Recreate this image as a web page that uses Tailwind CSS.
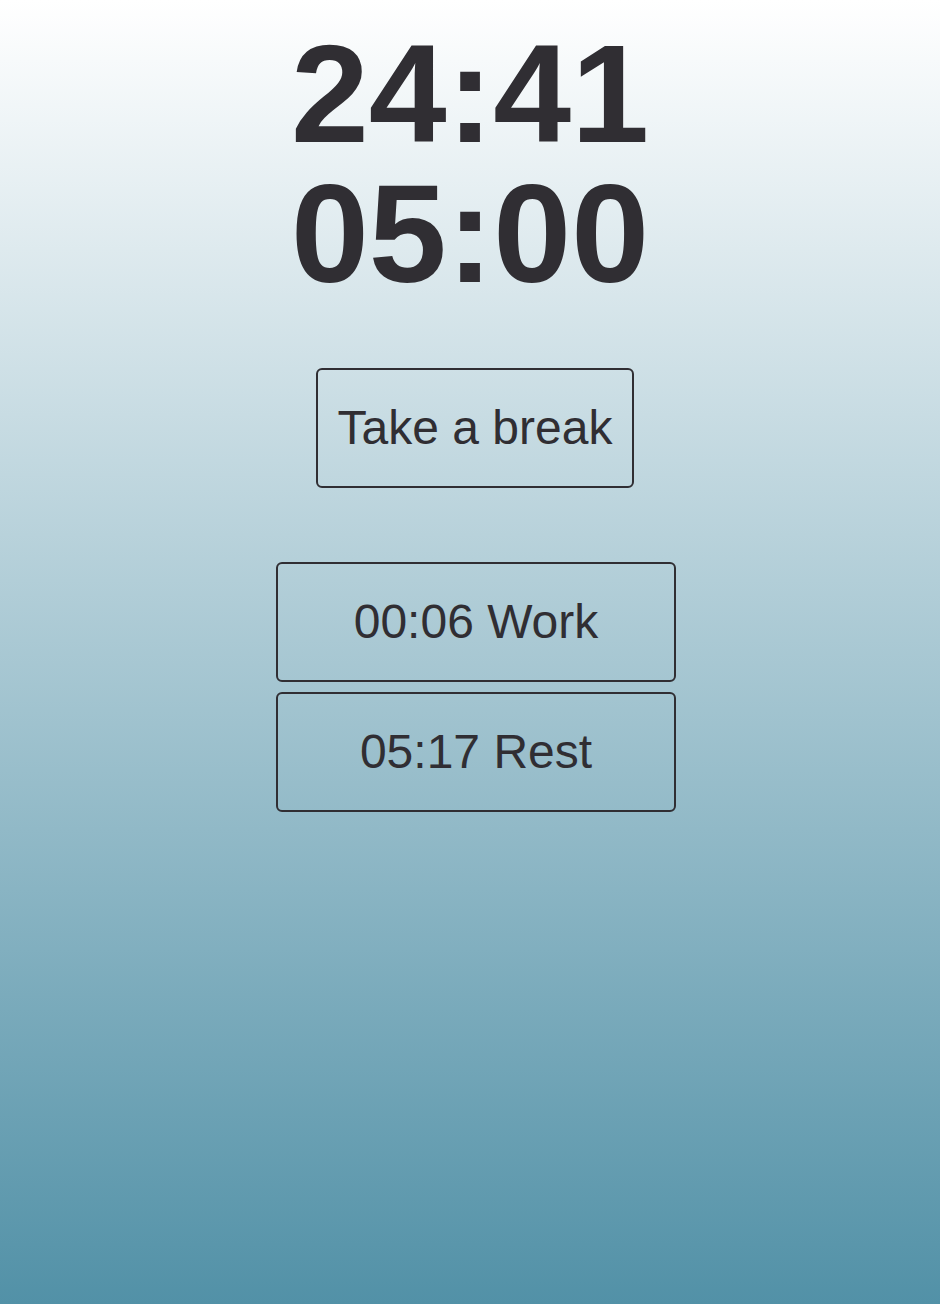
<!DOCTYPE html>
<html lang="en">
<head>
<meta charset="utf-8">
<meta name="viewport" content="width=device-width, initial-scale=1">
<title>Timer</title>
<script src="https://cdn.jsdelivr.net/npm/@tailwindcss/browser@4"></script>
</head>
<body class="flex min-h-screen flex-col items-center bg-linear-[to_bottom,#ffffff,#5291a7] pt-6 font-['Liberation_Sans',Arial,sans-serif] text-[#302e33]">
<main class="flex flex-col items-center">
<h1 class="text-[140px] leading-[140px] font-bold"><time class="block">24:41</time><time class="block">05:00</time></h1>
<button type="button" class="mt-16 ml-2.5 h-30 rounded-md border-2 border-[#302e33] px-5 text-5xl">Take a break</button>
<ul class="mt-[74px] ml-3 flex w-100 max-w-full flex-col gap-2.5 text-center text-5xl">
<li class="flex h-30 items-center justify-center rounded-md border-2 border-[#302e33]">00:06 Work</li>
<li class="flex h-30 items-center justify-center rounded-md border-2 border-[#302e33]">05:17 Rest</li>
</ul>
</main>
</body>
</html>
